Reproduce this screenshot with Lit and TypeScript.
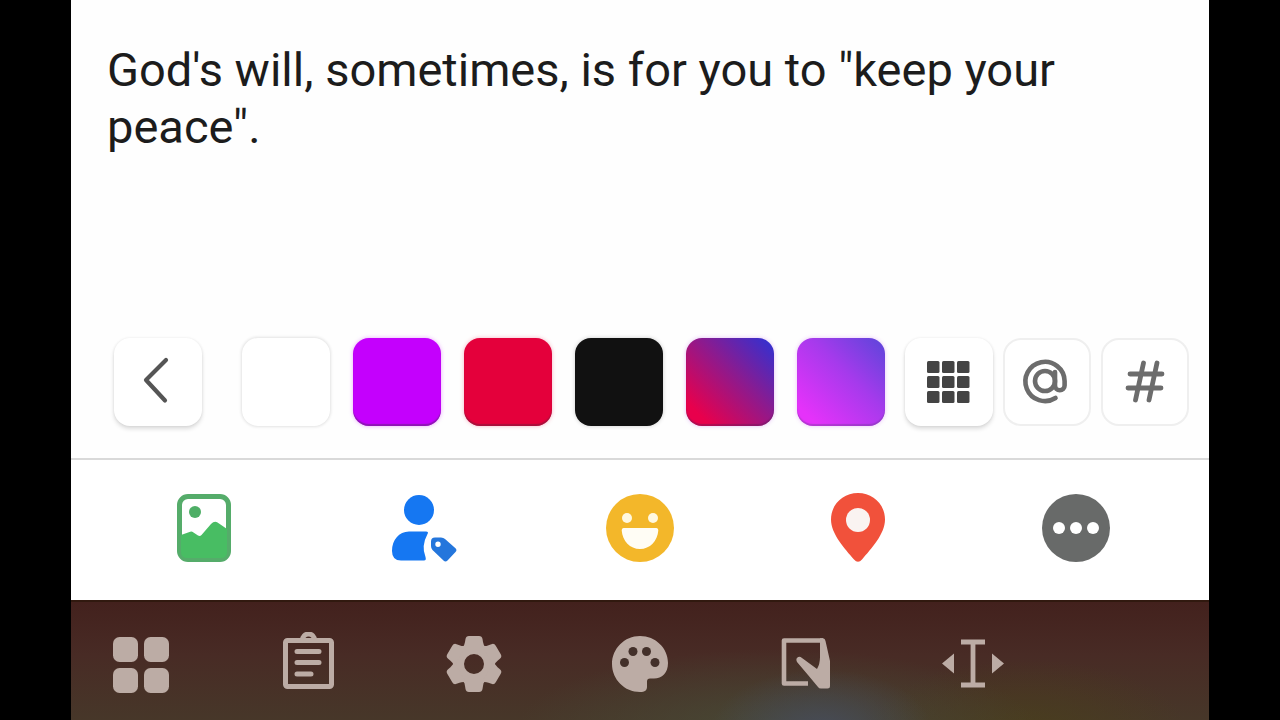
import { LitElement, html, css, svg } from "lit";
import { customElement, state } from "lit/decorators.js";

const INK = "#bcaca5";
const HOLE = "#43302a";

const icon = (size: number, body: unknown) => html`
  <svg width=${size} height=${size} viewBox="${-size / 2} ${-size / 2} ${size} ${size}" fill="none" aria-hidden="true">
    ${body}
  </svg>
`;

const backIcon = svg`<path d="M8 -22L-12 -2L7 18.500" stroke="#555" stroke-width="4.200" stroke-linecap="round" stroke-linejoin="round"/>`;

const gridIcon = svg`${[-21, -6, 9].map((y) =>
  [-22, -7, 8].map((x) => svg`<rect x=${x} y=${y} width="12.500" height="12" rx="1.500" fill="#444"/>`)
)}`;

const mentionIcon = svg`<g transform="translate(-2 -1)" stroke="#6c6c6c" stroke-width="4.600" stroke-linecap="round">
  <circle r="10"/>
  <path d="M10 -9V4.500A4.800 4.800 0 0 0 19.600 4.500V0A19.600 19.600 0 1 0 10.500 17"/>
</g>`;

const hashIcon = svg`<path d="M-1.500 -19L-9.500 18M12 -19L4 18M-15 -8H17M-17 6H16" stroke="#6c6c6c" stroke-width="4.800" stroke-linecap="round"/>`;

const photoIcon = svg`
  <rect x="-24.500" y="-31.500" width="49" height="63" rx="8.500" fill="#fff" stroke="#55ac6a" stroke-width="5"/>
  <circle cx="-9" cy="-16" r="6" fill="#4eae66"/>
  <path d="M-23 7L-14.500 4Q-12.500 3 -10.500 4.500L-6 7.500Q-4 8.500 -2.500 7L7 -4Q11 -8 15 -4.500L23 1V24Q23 30 17 30H-17Q-23 30 -23 24Z" fill="#48bd63"/>`;

const tagPersonIcon = svg`
  <circle cx="-3" cy="-18" r="15" fill="#1577f2"/>
  <path d="M-13 3.500H4Q7 3.500 5.500 6Q-1 18 3.500 29Q4.500 32.500 2 32.500H-21Q-30 32.500 -30 23C-30 12 -23 3.500 -13 3.500Z" fill="#1577f2"/>
  <path fill-rule="evenodd" d="M13 9.500H19Q21.500 9.500 23 11L33.200 20Q35.500 22 33.500 24L25.500 32.500Q23.500 34.500 21.500 32.500L10.500 22Q9 20.500 9 18V13.500Q9 9.500 13 9.500ZM16 13.500A2.700 2.700 0 1 0 16 18.900A2.700 2.700 0 1 0 16 13.500Z" fill="#2476dc"/>`;

const feelingIcon = svg`
  <circle r="34" fill="#f3b72a"/>
  <circle cx="-13" cy="-10" r="5" fill="#fff8e0"/>
  <circle cx="13" cy="-10" r="5" fill="#fff8e0"/>
  <path d="M-16.500 0H16.500Q18.500 0 18.300 2.500C17.500 13 10 21 0 21S-17.500 13 -18.300 2.500Q-18.500 0 -16.500 0Z" fill="#fffdf5"/>`;

const placeIcon = svg`
  <path d="M0 -35C-15 -35 -27 -23.500 -27 -8.500C-27 6 -13 21 -4 31.500Q0 36 4 31.500C13 21 27 6 27 -8.500C27 -23.500 15 -35 0 -35Z" fill="#f1513b"/>
  <circle cy="-8" r="12" fill="#faf3f1"/>`;

const moreIcon = svg`
  <circle r="34" fill="#686a69"/>
  ${[-17, 0, 17].map((x) => svg`<circle cx=${x} r="6" fill="#fff"/>`)}`;

const appsIcon = svg`${[-27, 4].map((y) =>
  [-28, 3].map((x) => svg`<rect x=${x} y=${y} width="25" height="25" rx="6.500" fill=${INK}/>`)
)}`;

const clipboardIcon = svg`<g stroke=${INK} stroke-width="5">
  <rect x="-21.500" y="-23.500" width="46" height="46" rx="2"/>
  <path d="M-4.500 -24A5.600 5.600 0 0 1 7.500 -24"/>
  <path d="M-10 -12.500H12M-10 -1.500H12M-10 10H4" stroke-linecap="round"/>
</g>`;

const gearIcon = svg`
  <circle r="15.500" stroke=${INK} stroke-width="11"/>
  ${[0, 60, 120, 180, 240, 300].map(
    (a) => svg`<path transform="rotate(${a})" d="M-12 -16Q-9.500 -18 -9 -22L-8.500 -25Q-8 -28 -5 -28H5Q8 -28 8.500 -25L9 -22Q9.500 -18 12 -16Z" fill=${INK}/>`
  )}`;

const paletteIcon = svg`
  <path d="M0 -28C-15.500 -28 -28 -15.500 -28 0S-15.500 28 0 28C5 28 7 26 7 23V17.500Q7 14.500 10 14.500H14C22 14.500 28 9 28 -1C28 -16 15.500 -28 0 -28Z" fill=${INK}/>
  ${[[-15.5, -1.5], [-7, -12.5], [6.5, -12.5], [15, -1.5]].map(
    ([x, y]) => svg`<circle cx=${x} cy=${y} r="4.500" fill=${HOLE}/>`
  )}`;

const handwritingIcon = svg`
  <path d="M2 19.500H-22V-23.500H17" stroke=${INK} stroke-width="4.600" stroke-linejoin="round"/>
  <path d="M14 -25.800H17Q19 -25.800 19.500 -23L24 -3V22Q24 24.500 21.500 24.500H15Q13 24.500 12 23L2 11L-9 -2Q-10.500 -5 -8.500 -6.500Q-6.500 -8 -4 -6L11 5Q14 0 14 -7Z" fill=${INK}/>`;

const cursorIcon = svg`
  <path d="M-12 -22H12M-12 21H12M0 -22V21" stroke=${INK} stroke-width="4.800"/>
  <path d="M-31 -0.500L-19 -10.500V9.500ZM31 -0.500L19 -10.500V9.500Z" fill=${INK}/>`;

const swatches = [
  { name: "White", tone: "white" },
  { name: "Purple", tone: "purple" },
  { name: "Red", tone: "red" },
  { name: "Black", tone: "black" },
  { name: "Red to blue", tone: "dusk" },
  { name: "Pink to violet", tone: "violet" },
];

const actions = [
  { name: "Photo", body: photoIcon },
  { name: "Tag people", body: tagPersonIcon },
  { name: "Feeling", body: feelingIcon },
  { name: "Location", body: placeIcon },
  { name: "More", body: moreIcon },
];

const keyboardTools = [
  { name: "Apps", body: appsIcon },
  { name: "Clipboard", body: clipboardIcon },
  { name: "Settings", body: gearIcon },
  { name: "Themes", body: paletteIcon },
  { name: "Handwriting", body: handwritingIcon },
  { name: "Move cursor", body: cursorIcon },
];

@customElement("app-root")
export class AppRoot extends LitElement {
  @state() private text = `God's will, sometimes, is for you to "keep your peace".`;

  static styles = css`
    :host {
      display: block;
      box-sizing: border-box;
      min-height: 100vh;
      padding: 0 71px;
      background: #000;
      font-family: Roboto, "Liberation Sans", sans-serif;
    }
    *,
    *::before,
    *::after {
      box-sizing: border-box;
    }
    button {
      display: grid;
      place-items: center;
      margin: 0;
      padding: 0;
      border: 0;
      background: none;
      cursor: pointer;
    }
    svg {
      display: block;
    }
    .composer {
      display: grid;
      grid-template-columns: minmax(0, 1fr);
      grid-template-rows: 1fr auto auto auto;
      min-height: 100vh;
      background: #fefefe;
    }
    .editor {
      display: block;
      width: 100%;
      min-height: 200px;
      margin: 0;
      padding: 41px 36px 0;
      border: 0;
      outline: 0;
      resize: none;
      background: none;
      color: #1c1c1c;
      font: 400 47px/57px Roboto, "Liberation Sans", sans-serif;
    }
    .backgrounds {
      display: flex;
      align-items: center;
      padding: 0 20px 32px 43px;
      border-bottom: 2px solid #d9d9d9;
    }
    .swatches {
      display: flex;
      gap: 23px;
      margin-left: 40px;
    }
    .tools {
      display: flex;
      gap: 10px;
      margin-left: auto;
    }
    .tile {
      flex: none;
      width: 88px;
      height: 88px;
      border-radius: 16px;
      background: #fff;
    }
    .raised {
      box-shadow: 0 3px 4px rgba(0, 0, 0, 0.13), 0 0 3px rgba(0, 0, 0, 0.08);
    }
    .outlined {
      border: 2px solid #efefef;
      border-radius: 18px;
    }
    .white {
      box-shadow: 0 0 3px 1px rgba(0, 0, 0, 0.11);
    }
    .purple {
      background: #c400fd;
      box-shadow: 0 0 4px rgba(196, 0, 253, 0.35), inset 0 -2px 1px rgba(90, 40, 110, 0.5);
    }
    .red {
      background: #e4003b;
      box-shadow: 0 0 4px rgba(228, 0, 59, 0.3), inset 0 -2px 1px rgba(110, 30, 60, 0.5);
    }
    .black {
      background: #111;
      box-shadow: 0 0 4px rgba(0, 0, 0, 0.2);
    }
    .dusk {
      background: linear-gradient(45deg, #e8004c 14%, #8a1b90 58%, #3530cf 96%);
      box-shadow: 0 0 4px rgba(170, 40, 230, 0.3), inset 0 -2px 1px rgba(90, 30, 90, 0.4);
    }
    .violet {
      background: linear-gradient(45deg, #e532fa 12%, #a63aec 58%, #6444dc 95%);
      box-shadow: 0 0 4px rgba(190, 60, 240, 0.3), inset 0 -2px 1px rgba(110, 60, 150, 0.4);
    }
    .actions {
      display: grid;
      grid-template-columns: repeat(5, 1fr);
      justify-items: center;
      padding: 32px 24px 36px;
      background: #fff;
    }
    .keyboard {
      display: flex;
      justify-content: space-between;
      align-items: center;
      height: 120px;
      padding: 6px 38px 0;
      border-top: 2px solid #31190f;
      background:
        radial-gradient(ellipse 110px 60px at 66% 108%, rgba(70, 76, 92, 0.9), transparent),
        radial-gradient(ellipse 260px 80px at 62% 108%, rgba(72, 76, 56, 0.8), transparent),
        radial-gradient(ellipse 160px 70px at 84% 108%, rgba(74, 64, 26, 0.7), transparent),
        linear-gradient(#43211d, #482b25 45%, #473729);
    }
    .keyboard::after {
      content: "";
      width: 64px;
    }
  `;

  private onInput(event: Event) {
    this.text = (event.target as HTMLTextAreaElement).value;
  }

  render() {
    return html`
      <main class="composer">
        <textarea class="editor" aria-label="Post text" spellcheck="false" .value=${this.text} @input=${this.onInput}></textarea>
        <div class="backgrounds">
          <button class="tile raised" aria-label="Back">${icon(64, backIcon)}</button>
          <div class="swatches">
            ${swatches.map((s) => html`<button class="tile ${s.tone}" aria-label=${s.name}></button>`)}
          </div>
          <div class="tools">
            <button class="tile raised" aria-label="All backgrounds">${icon(64, gridIcon)}</button>
            <button class="tile outlined" aria-label="Mention">${icon(64, mentionIcon)}</button>
            <button class="tile outlined" aria-label="Hashtag">${icon(64, hashIcon)}</button>
          </div>
        </div>
        <nav class="actions" aria-label="Add to post">
          ${actions.map((a) => html`<button aria-label=${a.name}>${icon(72, a.body)}</button>`)}
        </nav>
        <div class="keyboard" role="toolbar" aria-label="Keyboard tools">
          ${keyboardTools.map((t) => html`<button aria-label=${t.name}>${icon(64, t.body)}</button>`)}
        </div>
      </main>
    `;
  }
}
